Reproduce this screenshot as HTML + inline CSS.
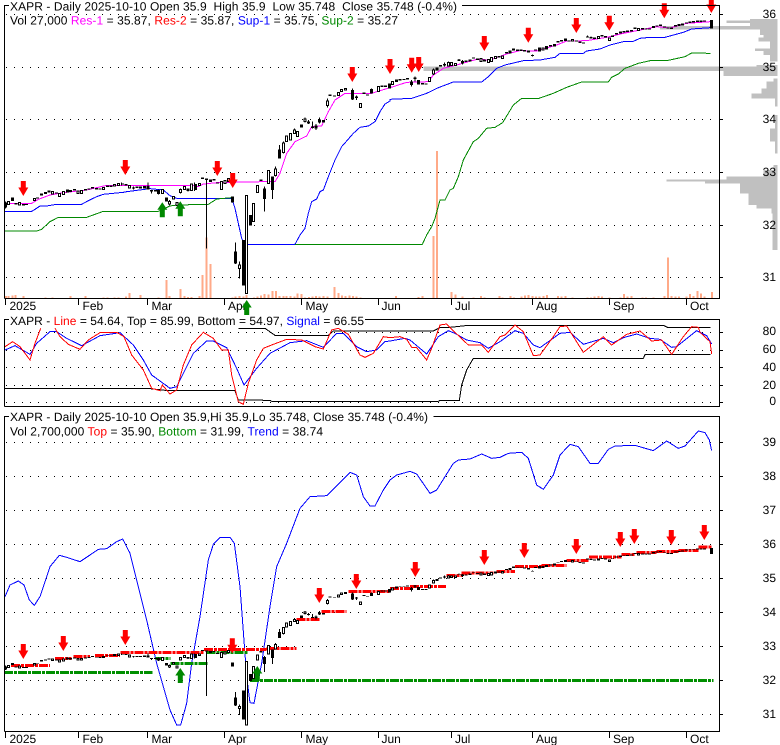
<!DOCTYPE html>
<html><head><meta charset="utf-8"><title>XAPR</title>
<style>
html,body{margin:0;padding:0;background:#fff;width:780px;height:745px;overflow:hidden}
svg{display:block}
svg *{vector-effect:non-scaling-stroke}
text{font-family:"Liberation Sans",sans-serif;font-size:12px;fill:#000;stroke:none;white-space:pre;text-rendering:geometricPrecision}
.l{fill:none;stroke-width:1;shape-rendering:crispEdges}
.g{stroke:#000;stroke-width:1;stroke-dasharray:1 7;fill:none;shape-rendering:crispEdges}
.f{stroke:#000;stroke-width:1;fill:none;shape-rendering:crispEdges}
</style></head><body>
<svg width="780" height="745" viewBox="0 0 780 745" xmlns="http://www.w3.org/2000/svg">
<defs>
<path id="dn" d="M-2.5 0H2.5V6.5H5L0 15L-5 6.5H-2.5Z" fill="#f00"/>
<path id="up" d="M-2.5 15H2.5V7.5H5L0 0L-5 7.5H-2.5Z" fill="#080"/>
<g id="candles" shape-rendering="crispEdges">
<g>
<path stroke="#000" stroke-width="1" fill="none" d="M17 604v22M444 548v20M455 570v10M476 568v16M509 600v16M541 565v16M564 565v10M619 536V745M706 728v64M718 785v50M793 560v75M817 530v67M826 500v30M838 435v41M850 425v35M883 385v15M915 352v15M925 360v12M937 365v20M948 372v18M958 352v18M982 295v27M1069 287v13M1114 265v16M1057 265v35M364 548v8M400 560v8M584 548v25"/>
<path stroke="#000" stroke-width="3" fill="none" d="M17 608v14M37 592v11M48 609v4M70 612v4M80 612v3M113 592v4M125 580v6M136 576v6M147 572v5M169 577v4M202 568v9M212 570v6M223 567v5M256 567v4M267 565v4M278 561v5M289 564v4M300 565v4M322 557v4M333 557v4M367 550v4M378 552v4M400 562v4M411 560v4M422 560v6M433 558v7M444 558v10M455 570v4M466 570v4M476 570v12M500 592v13M564 565v8M586 552v18M608 533v4M619 536v4M631 538v8M642 537v4M653 547v4M697 590v18M706 754v36M731 720v136M752 645v32M783 538v5M793 565v32M817 530v40M838 448v28M904 373v10M925 365v5M937 380v4M948 377v8M958 358v9M970 360v7M990 284v4M1004 286v4M1057 270v28M1069 290v4M1092 278v4M1103 284v3M1114 267v14M1146 257v4M1157 257v4M1168 250v15"/>
<path stroke="#000" stroke-width="1" fill="#fff" d="M23 604h6v9h-6zM56 607h6v8h-6zM100 595h6v7h-6zM155 574h6v8h-6zM176 580h6v9h-6zM187 575h6v8h-6zM231 573h6v7h-6zM242 571h6v9h-6zM308 562h6v6h-6zM341 553h6v5h-6zM353 551h6v6h-6zM386 556h6v8h-6zM485 568h6v13h-6zM506 604h6v8h-6zM517 590h6v7h-6zM528 607h6v10h-6zM538 568h6v10h-6zM550 559h6v9h-6zM572 552h6v19h-6zM595 550h6v7h-6zM661 544h6v24h-6zM672 541h6v9h-6zM683 536h6v9h-6zM715 795h6v10h-6zM736 586h6v294h-6zM757 610h6v55h-6zM769 556h6v22h-6zM802 511h6v40h-6zM823 507h6v20h-6zM847 429h6v28h-6zM857 408h6v17h-6zM868 400h6v20h-6zM880 390h6v10h-6zM889 395h6v15h-6zM912 357h6v7h-6zM979 303h6v13h-6zM1013 277h6v10h-6zM1022 269h6v5h-6zM1034 265h6v5h-6zM1078 310h6v12h-6zM1132 260h6v15h-6z"/>
</g>
<g transform="translate(1170 0)">
<path stroke="#000" stroke-width="1" fill="none" d="M64 240v20M75 230v15M130 205v20M163 187v13M175 185v13M207 177v5M217 180v13M427 163v6M592 107v6M603 109v6"/>
<path stroke="#000" stroke-width="3" fill="none" d="M20 238v8M30 237v4M42 237v3M52 234v4M64 245v10M75 233v4M86 240v14M97 249v4M108 250v4M141 202v10M152 195v5M163 192v4M207 179v4M217 183v7M228 182v4M240 178v6M251 172v4M262 176v4M284 178v6M327 168v4M349 156v5M360 152v9M371 145v7M382 149v4M393 149v4M404 150v4M415 152v6M427 165v3M437 148v4M448 142v13M470 138v10M481 135v5M493 132v8M504 123v4M515 120v5M526 115v8M537 121v4M559 121v4M570 125v4M581 127v4M592 109v4M603 111v4M614 113v4M636 105v5M647 108v4M668 107v4M680 99v4M691 95v5M702 93v4M713 92v4M724 90v5M735 83v4M757 84v5M768 85v4M779 85v4M790 78v6M801 76v4M812 74v4M823 79v4M834 82v4M845 82v5M856 75v5M867 72v6M878 70v6M889 67v4M900 65v4M911 63v4M922 62v4M933 62v4M944 61v4M965 60v26"/>
<path stroke="#000" stroke-width="1" fill="#fff" d="M4 245h6v8h-6zM116 232h6v13h-6zM127 210h6v12h-6zM172 188h6v10h-6zM181 188h6v9h-6zM193 190h6v7h-6zM270 175h6v10h-6zM292 178h6v9h-6zM302 172h6v13h-6zM313 170h6v6h-6zM335 168h6v8h-6zM456 144h6v6h-6zM545 118h6v5h-6zM622 110h6v5h-6zM655 114h6v7h-6zM743 85h6v6h-6z"/>
</g>
</g>
</defs>
<rect width="780" height="745" fill="#fff"/>

<!-- grids -->
<path class="g" d="M6 14.5H716M6 67.5H716M6 119.5H716M6 172.5H716M6 225.5H716M6 277.5H716"/>
<path class="g" d="M6 332.5H716M6 350.5H716M6 367.5H716M6 385.5H716M6 402.5H716"/>
<path class="g" d="M6 442.5H716M6 476.5H716M6 510.5H716M6 544.5H716M6 578.5H716M6 612.5H716M6 646.5H716M6 680.5H716M6 714.5H716"/>

<!-- panel 1 -->
<g transform="scale(.33333)">
<g transform="translate(1170 0)">
<path fill="#c0c0c0" shape-rendering="crispEdges" d="M1163 57H1080V62H1010V69H1080V78H810V88H1110V105H1120V112H1105V125H1140V145H1095V153H1120V165H1140V185H1163V195H1100V200H100V213H1000V228H1163V235H1150V245H1130V265H1115V280H1085V295H1155V320H1163V345H1155V385H1140V425H1155V460H1163V495H1150V510H1120V530H1010V538H830V545H945V550H1050V580H1075V615H1100V625H1145V640H1148V750H1163Z"/>
</g>
<path fill="none" stroke="#ffaa88" stroke-width="2" shape-rendering="crispEdges" d="M18 895V888M26 895V888M37 895V887M47 895V885M70 895V888M136 895V892M158 895V892M212 895V888M256 895V888M311 895V892M322 895V892M344 895V892M356 895V892M378 895V890M389 895V879M422 895V885M476 895V892M500 895V840M509 895V888M542 895V867M553 895V888M564 895V891M575 895V891M598 895V888M608 895V825M620 895V712M632 895V792M697 895V892M707 895V889M718 895V888M730 895V890M740 895V885M762 895V892M772 895V890M783 895V887M793 895V882M805 895V884M818 895V873M828 895V873M838 895V888M850 895V888M860 895V888M871 895V888M883 895V889M893 895V880M905 895V882M915 895V892M927 895V891M937 895V890M948 895V888M958 895V890M970 895V888M982 895V890M1004 895V861M1016 895V879M1026 895V887M1037 895V888M1049 895V887M1059 895V888M1069 895V890M1081 895V892"/>
<path fill="none" stroke="#ffaa88" stroke-width="2" shape-rendering="crispEdges" transform="translate(1170 0)" d="M18 895V888M86 895V891M97 895V888M130 895V708M141 895V453M185 895V876M196 895V884M218 895V890M251 895V892M273 895V888M284 895V892M328 895V888M338 895V892M361 895V888M372 895V892M394 895V890M405 895V887M416 895V885M427 895V888M438 895V890M449 895V890M460 895V888M471 895V885M504 895V888M515 895V890M526 895V888M548 895V892M592 895V892M603 895V892M614 895V890M625 895V888M636 895V890M658 895V892M691 895V892M702 895V882M713 895V890M724 895V888M757 895V892M768 895V892M790 895V892M823 895V888M834 895V773M845 895V888M856 895V890M867 895V890M889 895V890M900 895V882M911 895V888M922 895V873M933 895V881M944 895V890M966 895V876"/>
<path class="l" stroke="#0000ff" d="M15 634L95 634L105 628L120 618L140 618L170 613L245 613L265 602L290 590L310 583L370 577L380 575L450 566L470 568L490 570L510 587L530 595L695 595L705 625L725 715L735 733L885 733L900 705L915 685L925 640L935 605L950 597L960 575L970 570L985 530L1005 480L1025 440L1040 423L1060 400L1080 382L1105 378L1125 365L1140 335L1155 312L1170 303L1170 298L1235 295L1280 280L1315 263L1360 246L1445 246L1465 230L1490 205L1515 195L1570 182L1620 180L1665 172L1680 160L1750 160L1760 153L1800 147L1830 135L1870 125L1900 124L1920 115L1950 112L1995 112L2050 97L2075 87L2130 83"/>
<path class="l" stroke="#008800" d="M15 693L110 693L125 688L150 665L175 652L260 652L310 634L475 634L510 618L530 615L625 613L650 597L695 593M885 733L1267 733L1280 705L1295 680L1305 655L1320 600L1335 600L1350 570L1360 565L1375 530L1390 480L1420 425L1435 415L1460 385L1485 382L1508 368L1540 315L1565 295L1617 295L1660 280L1700 262L1745 246L1825 246L1835 232L1855 222L1875 205L1915 190L1955 181L2005 181L2055 170L2075 159L2132 160"/>
<path class="l" stroke="#ff00ff" d="M15 610L95 610L115 598L150 585L190 578L260 570L320 556L580 556L595 560L610 552L650 548L790 545L825 545L840 520L860 460L885 425L920 408L935 380L965 378L985 335L1005 300L1035 280L1115 280L1140 272L1170 263L1220 247L1285 245L1300 225L1330 205L1370 195L1430 178L1470 180L1520 162L1560 152L1610 153L1670 135L1700 123L1760 122L1820 112L1870 100L1920 90L1970 80L2010 84L2060 70L2130 65"/>
<use href="#candles"/>
</g>
<use href="#dn" x="23.3" y="181"/><use href="#dn" x="125.3" y="160"/><use href="#dn" x="217.3" y="161"/><use href="#dn" x="232.7" y="173"/><use href="#dn" x="352.3" y="67"/><use href="#dn" x="390" y="59"/><use href="#dn" x="411.7" y="57.7"/><use href="#dn" x="418.7" y="57"/><use href="#dn" x="484.3" y="36"/><use href="#dn" x="528.3" y="27.7"/><use href="#dn" x="576.3" y="18"/><use href="#dn" x="609.3" y="15.7"/><use href="#dn" x="664.3" y="3.3"/><use href="#dn" x="711.3" y="-2"/>
<use href="#up" x="162.3" y="202.3"/><use href="#up" x="180.3" y="201.3"/>

<!-- panel 2 -->
<g transform="translate(0 295) scale(.33333)">
<path class="l" stroke="#000" d="M15 281L450 281L505 287L705 287L715 315L810 316L815 319L1170 319L1315 319L1320 316L1378 316L1385 270L1400 225L1420 190L1930 190L1935 179L2132 178"/>
<path class="l" stroke="#000" d="M715 100L795 100L825 121L985 121L1000 108L1300 108L1320 98L1350 97L1405 91L1990 91L2002 97L2132 97"/>
<path class="l" stroke="#0000ff" d="M15 165L45 152L90 178L110 145L150 110L170 110L200 130L245 152L300 122L360 113L400 150L430 195L455 240L480 258L510 280L530 275L580 175L620 138L640 138L680 158L710 220L732 270L770 220L810 175L870 143L920 137L970 157L1010 115L1030 115L1070 155L1100 170L1130 165L1155 140L1170 138L1215 130L1230 135L1280 177L1315 125L1345 107L1365 115L1400 135L1440 143L1465 160L1500 140L1545 107L1570 115L1600 150L1620 158L1680 115L1710 112L1750 148L1810 130L1840 143L1870 128L1910 117L1950 130L1980 133L2015 157L2030 155L2090 107L2120 122L2135 147"/>
<path class="l" stroke="#ff0000" d="M15 155L38 140L60 155L90 195L105 145L122 100M165 100L180 125L205 148L240 163L265 135L300 113L350 112L372 125L395 180L430 225L455 280L480 287L487 270L510 297L530 285L550 210L575 150L610 112L640 130L665 165L685 165L695 240L715 320L730 328L745 265L770 195L790 160L815 150L860 133L905 135L945 155L970 162L995 105L1015 100L1045 118L1080 180L1095 187L1120 175L1150 125L1170 128L1200 125L1220 133L1235 157L1250 158L1280 195L1295 160L1320 90L1340 87L1365 112L1405 150L1445 150L1465 172L1500 125L1515 120L1545 90L1570 110L1600 182L1620 180L1660 125L1680 95L1700 93L1750 172L1810 125L1835 150L1880 118L1905 112L1920 108L1955 138L1985 135L2015 178L2050 125L2075 95L2095 97L2100 112L2130 140L2135 177"/>
</g>

<!-- panel 3 -->
<g transform="translate(0 410) scale(.33333)">
<path class="l" stroke="#0000ff" d="M15 560L30 525L55 513L72 525L88 570L103 586L120 560L150 470L178 436L200 442L240 455L270 435L295 418L320 416L350 395L368 387L390 430L410 510L440 630L470 760L510 900L530 945L542 945L560 880L575 760L600 620L625 450L640 403L660 383L690 382L703 400L720 530L740 800L750 878L762 880L785 760L810 590L830 470L860 400L900 295L930 260L980 257L1050 187L1070 195L1090 260L1110 288L1125 288L1150 240L1170 210L1190 195L1230 184L1250 192L1290 250L1310 240L1360 160L1375 150L1410 147L1445 132L1475 145L1500 142L1525 130L1565 127L1585 145L1610 225L1630 238L1660 195L1680 135L1710 103L1735 110L1770 160L1795 160L1825 118L1845 108L1905 106L1960 122L2000 93L2035 115L2055 108L2095 63L2115 68L2128 90L2135 122"/>
<g fill="none" stroke="#ff0000" stroke-width="3" stroke-dasharray="9 1 3 1" shape-rendering="crispEdges">
<path d="M33 767H150M165 745H215M220 740H270M285 736H360M362 727H610M612 719H800M800 715H890M890 628H962M965 604H1040M1045 545H1170"/>
<path transform="translate(1170 0)" d="M0 535H60M60 529H168M170 497H218M215 489H310M320 484H375M375 469H455M455 466H530M530 451H595M597 441H695M695 433H737M740 427H800M800 424H865M865 421H925M925 411H968"/>
</g>
<g fill="none" stroke="#008f00" stroke-width="3" stroke-dasharray="9 1 3 1" shape-rendering="crispEdges">
<path d="M12 787H458M467 745H512M512 761H622M620 727H745M750 811H2140"/>
</g>
</g>
<use href="#candles" transform="matrix(.33333 0 0 .21547 0 535.25)"/>
<use href="#dn" x="23.3" y="644"/><use href="#dn" x="63.3" y="636"/><use href="#dn" x="125.3" y="630"/><use href="#dn" x="232.3" y="638.3"/><use href="#dn" x="319.3" y="588"/><use href="#dn" x="356.3" y="574"/><use href="#dn" x="415.3" y="562"/><use href="#dn" x="484.3" y="550"/><use href="#dn" x="524.3" y="543"/><use href="#dn" x="576.3" y="539"/><use href="#dn" x="620.3" y="532"/><use href="#dn" x="634.3" y="529"/><use href="#dn" x="671.3" y="530"/><use href="#dn" x="704.3" y="525"/>
<use href="#up" x="180.3" y="668"/><use href="#up" x="257.3" y="666"/>

<!-- frames -->
<path class="f" d="M4.5 298.5V5.5H9M462 5.5H719.5V298.5H4.5"/>
<path class="f" d="M4.5 406.5V319.5H9M365 319.5H719.5V406.5H4.5"/>
<path class="f" d="M4.5 731.5V416.5H9M433.5 416.5H719.5V731.5H4.5"/>
<!-- ticks -->
<path class="f" d="M5.5 299V305M78.5 299V305M147.5 299V305M224.5 299V305M301.5 299V305M378.5 299V305M451.5 299V305M532.5 299V305M609.5 299V305M686.5 299V305"/>
<path class="f" d="M5.5 732V738M78.5 732V738M147.5 732V738M224.5 732V738M301.5 732V738M378.5 732V738M451.5 732V738M532.5 732V738M609.5 732V738M686.5 732V738"/>
<path class="f" d="M720 14.5H723M720 67.5H723M720 119.5H723M720 172.5H723M720 225.5H723M720 277.5H723M720 332.5H723M720 350.5H723M720 367.5H723M720 385.5H723M720 402.5H723M720 442.5H723M720 476.5H723M720 510.5H723M720 544.5H723M720 578.5H723M720 612.5H723M720 646.5H723M720 680.5H723M720 714.5H723"/>

<!-- text -->
<text x="10" y="10.5" textLength="447">XAPR - Daily 2025-10-10 Open 35.9  High 35.9  Low 35.748  Close 35.748 (-0.4%)</text>
<text x="10" y="24.5" textLength="388">Vol 27,000 <tspan style="fill:#f0f">Res-1</tspan> = 35.87, <tspan style="fill:#f00">Res-2</tspan> = 35.87, <tspan style="fill:#00f">Sup-1</tspan> = 35.75, <tspan style="fill:#080">Sup-2</tspan> = 35.27</text>
<text x="9.5" y="310">2025</text><text x="82.5" y="310">Feb</text><text x="151.5" y="310">Mar</text><text x="228" y="310">Apr</text><text x="305.5" y="310">May</text><text x="381.5" y="310">Jun</text><text x="455" y="310">Jul</text><text x="536" y="310">Aug</text><text x="613" y="310">Sep</text><text x="690" y="310">Oct</text>
<use href="#up" x="246.7" y="300"/>
<text x="10" y="325" textLength="354">XAPR - <tspan style="fill:#f00">Line</tspan> = 54.64, Top = 85.99, Bottom = 54.97, <tspan style="fill:#00f">Signal</tspan> = 66.55</text>
<text x="10" y="421" textLength="418">XAPR - Daily 2025-10-10 Open 35.9,Hi 35.9,Lo 35.748, Close 35.748 (-0.4%)</text>
<text x="10" y="435.5" textLength="313">Vol 2,700,000 <tspan style="fill:#f00">Top</tspan> = 35.90, <tspan style="fill:#080">Bottom</tspan> = 31.99, <tspan style="fill:#00f">Trend</tspan> = 38.74</text>
<text x="9.5" y="743">2025</text><text x="82.5" y="743">Feb</text><text x="151.5" y="743">Mar</text><text x="228" y="743">Apr</text><text x="305.5" y="743">May</text><text x="381.5" y="743">Jun</text><text x="455" y="743">Jul</text><text x="536" y="743">Aug</text><text x="613" y="743">Sep</text><text x="690" y="743">Oct</text>
<g text-anchor="end">
<text x="776" y="18">36</text><text x="776" y="71">35</text><text x="776" y="123">34</text><text x="776" y="176">33</text><text x="776" y="229">32</text><text x="776" y="281">31</text>
<text x="776" y="335">80</text><text x="776" y="353">60</text><text x="776" y="371">40</text><text x="776" y="389">20</text><text x="776" y="405">0</text>
<text x="776" y="446">39</text><text x="776" y="480">38</text><text x="776" y="514">37</text><text x="776" y="548">36</text><text x="776" y="582">35</text><text x="776" y="616">34</text><text x="776" y="650">33</text><text x="776" y="684">32</text><text x="776" y="718">31</text>
</g>
</svg>
</body></html>
